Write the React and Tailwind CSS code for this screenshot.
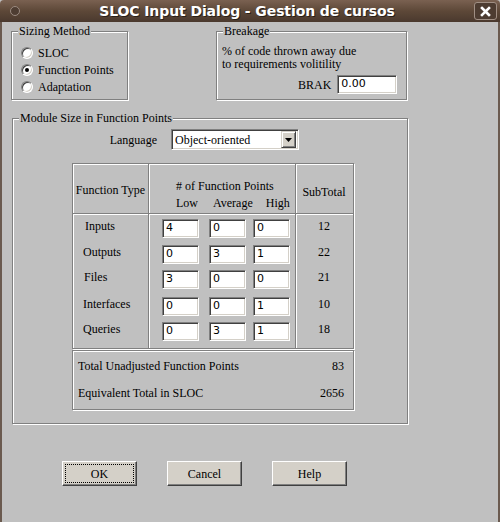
import React from "react";

const serif = "[font-family:'Liberation_Serif',serif] text-[12px] text-black";
const etched = "border border-[#808080] shadow-[inset_1px_1px_0_#fff,1px_1px_0_#fff]";

function Field({ value, className = "" }) {
  return (
    <div
      className={`h-[19px] bg-white border border-t-[#808080] border-l-[#808080] border-b-white border-r-white shadow-[inset_1px_1px_0_#404040,inset_-1px_-1px_0_#d4d0c8] pl-[3px] flex items-center [font-family:'DejaVu_Sans',sans-serif] text-[11px] text-black ${className}`}
    >
      {value}
    </div>
  );
}

function Radio({ checked, label }) {
  return (
    <div className="flex items-center h-[17px]">
      <div className="w-[12px] h-[12px] rounded-full bg-white border border-t-[#808080] border-l-[#808080] border-b-white border-r-white shadow-[inset_1px_1px_0_#404040,inset_-1px_-1px_0_#d4d0c8] flex items-center justify-center">
        {checked && <div className="w-[4px] h-[4px] rounded-full bg-black" />}
      </div>
      <span className={`${serif} ml-[5px]`}>{label}</span>
    </div>
  );
}

function Group({ title, className = "", children }) {
  return (
    <div className={`relative ${etched} ${className}`}>
      <div className={`absolute -top-[8px] left-[6px] px-[1px] bg-[#c0c0c0] leading-[14px] ${serif}`}>{title}</div>
      {children}
    </div>
  );
}

function Button({ label, focus }) {
  return (
    <div className="w-[75px] h-[25px] bg-[#d4d0c8] border border-t-white border-l-white border-b-[#404040] border-r-[#404040] shadow-[inset_-1px_-1px_0_#808080] p-[2px]">
      <div className={`w-full h-full flex items-center justify-center ${serif} ${focus ? "border border-dotted border-black" : ""}`}>
        {label}
      </div>
    </div>
  );
}

const rows = [
  { name: "Inputs", pl: "pl-[12px]", h: "h-[26px]", v: ["4", "0", "0"], sub: "12" },
  { name: "Outputs", pl: "pl-[10px]", h: "h-[25px]", v: ["0", "3", "1"], sub: "22" },
  { name: "Files", pl: "pl-[11px]", h: "h-[27px]", v: ["3", "0", "0"], sub: "21" },
  { name: "Interfaces", pl: "pl-[10px]", h: "h-[25px]", v: ["0", "0", "1"], sub: "10" },
  { name: "Queries", pl: "pl-[10px]", h: "h-[25px]", v: ["0", "3", "1"], sub: "18" },
];

export default function App() {
  return (
    <div className="w-[500px] h-[522px] flex flex-col bg-[#c0c0c0] overflow-hidden">
      {/* Title bar */}
      <div className="h-[22px] shrink-0 rounded-t-[4px] bg-linear-to-b from-[#7a6151] via-[#5d4838] to-[#4a392e] flex items-center relative">
        <div className="ml-[10px] w-[10px] h-[10px] rounded-full border border-[#9a8a80] bg-[#4e3d32]" />
        <div className="flex-1 text-center [font-family:'DejaVu_Sans',sans-serif] font-bold text-[14px] text-white [text-shadow:1px_1px_0_#2a2018] tracking-[-0.1px]">
          SLOC Input Dialog - Gestion de cursos
        </div>
        <div className="mr-[3px] w-[23px] h-[18px] rounded-[3px] border border-[#a08f84] bg-[#4d3c31] flex items-center justify-center">
          <svg width="11" height="11" viewBox="0 0 11 11">
            <path d="M2 2 L9 9 M9 2 L2 9" stroke="white" strokeWidth="2.6" strokeLinecap="square" />
          </svg>
        </div>
      </div>

      {/* Body */}
      <div className="flex-1 flex flex-col border-l-2 border-r-2 border-l-[#6a5a4f] border-r-[#6a5a4f]">
        {/* Top row */}
        <div className="flex mt-[9px]">
          <Group title="Sizing Method" className="ml-[9px] w-[117px] h-[69px]">
            <div className="pl-[9px] pt-[12px] flex flex-col">
              <Radio label="SLOC" />
              <Radio label="Function Points" checked />
              <Radio label="Adaptation" />
            </div>
          </Group>
          <Group title="Breakage" className="ml-[88px] w-[191px] h-[69px]">
            <div className={`pl-[5px] pt-[13px] leading-[13px] ${serif}`}>
              <div>% of code thrown away due</div>
              <div>to requirements volitility</div>
            </div>
            <div className="flex items-center mt-[4px]">
              <span className={`${serif} ml-[81px]`}>BRAK</span>
              <Field value="0.00" className="ml-[6px] w-[60px]" />
            </div>
          </Group>
        </div>

        {/* Module size group */}
        <Group title="Module Size in Function Points" className="mt-[18px] ml-[10px] w-[396px] h-[306px]">
          <div className="flex items-center mt-[10px]">
            <div className={`w-[144px] text-right ${serif}`}>Language</div>
            <div className="ml-[14px] w-[128px] h-[21px] bg-white border border-t-[#808080] border-l-[#808080] border-b-white border-r-white shadow-[inset_1px_1px_0_#404040,inset_-1px_-1px_0_#d4d0c8] flex items-center">
              <span className={`${serif} ml-[3px] flex-1`}>Object-oriented</span>
              <div className="mr-[2px] w-[15px] h-[17px] bg-[#d4d0c8] border border-t-[#d4d0c8] border-l-[#d4d0c8] border-b-[#404040] border-r-[#404040] shadow-[inset_1px_1px_0_#fff,inset_-1px_-1px_0_#808080] flex items-center justify-center">
                <svg width="7" height="4" viewBox="0 0 7 4">
                  <path d="M0 0 H7 L3.5 4 Z" fill="black" />
                </svg>
              </div>
            </div>
          </div>

          {/* Table */}
          <div className={`ml-[59px] mt-[13px] w-[282px] h-[186px] ${etched} grid grid-cols-[75px_147px_58px] grid-rows-[49px_1fr]`}>
            <div className={`flex items-center justify-center pt-[3px] ${serif}`}>Function Type</div>
            <div className={`shadow-[inset_1px_0_0_#808080,inset_2px_0_0_#fff] pl-[28px] pt-[14px] ${serif} leading-[17px]`}>
              <div># of Function Points</div>
              <div className="flex">
                <span>Low</span>
                <span className="ml-[15px]">Average</span>
                <span className="ml-[13px]">High</span>
              </div>
            </div>
            <div className={`shadow-[inset_1px_0_0_#808080,inset_2px_0_0_#fff] flex items-center justify-center pt-[7px] ${serif}`}>SubTotal</div>

            <div className="shadow-[inset_0_1px_0_#808080,inset_0_2px_0_#fff] pt-[6px]">
              {rows.map((r) => (
                <div key={r.name} className={`${r.h} ${r.pl} ${serif} leading-[14px]`}>{r.name}</div>
              ))}
            </div>
            <div className="shadow-[inset_1px_1px_0_#808080,inset_2px_2px_0_#fff] pt-[6px]">
              {rows.map((r) => (
                <div key={r.name} className={`${r.h} flex`}>
                  <Field value={r.v[0]} className="ml-[14px] w-[37px]" />
                  <Field value={r.v[1]} className="ml-[10px] w-[37px]" />
                  <Field value={r.v[2]} className="ml-[7px] w-[37px]" />
                </div>
              ))}
            </div>
            <div className="shadow-[inset_1px_1px_0_#808080,inset_2px_2px_0_#fff] pt-[6px]">
              {rows.map((r) => (
                <div key={r.name} className={`${r.h} text-center ${serif} leading-[14px]`}>{r.sub}</div>
              ))}
            </div>
          </div>

          {/* Totals */}
          <div className={`ml-[59px] mt-[1px] w-[282px] h-[60px] ${etched} flex flex-col pt-[8px] pl-[5px] pr-[9px] ${serif}`}>
            <div className="flex justify-between h-[27px] leading-[14px]">
              <span>Total Unadjusted Function Points</span>
              <span>83</span>
            </div>
            <div className="flex justify-between leading-[14px]">
              <span>Equivalent Total in SLOC</span>
              <span>2656</span>
            </div>
          </div>
        </Group>

        {/* Buttons */}
        <div className="flex mt-[37px] ml-[60px] gap-[30px]">
          <Button label="OK" focus />
          <Button label="Cancel" />
          <Button label="Help" />
        </div>
      </div>
    </div>
  );
}
